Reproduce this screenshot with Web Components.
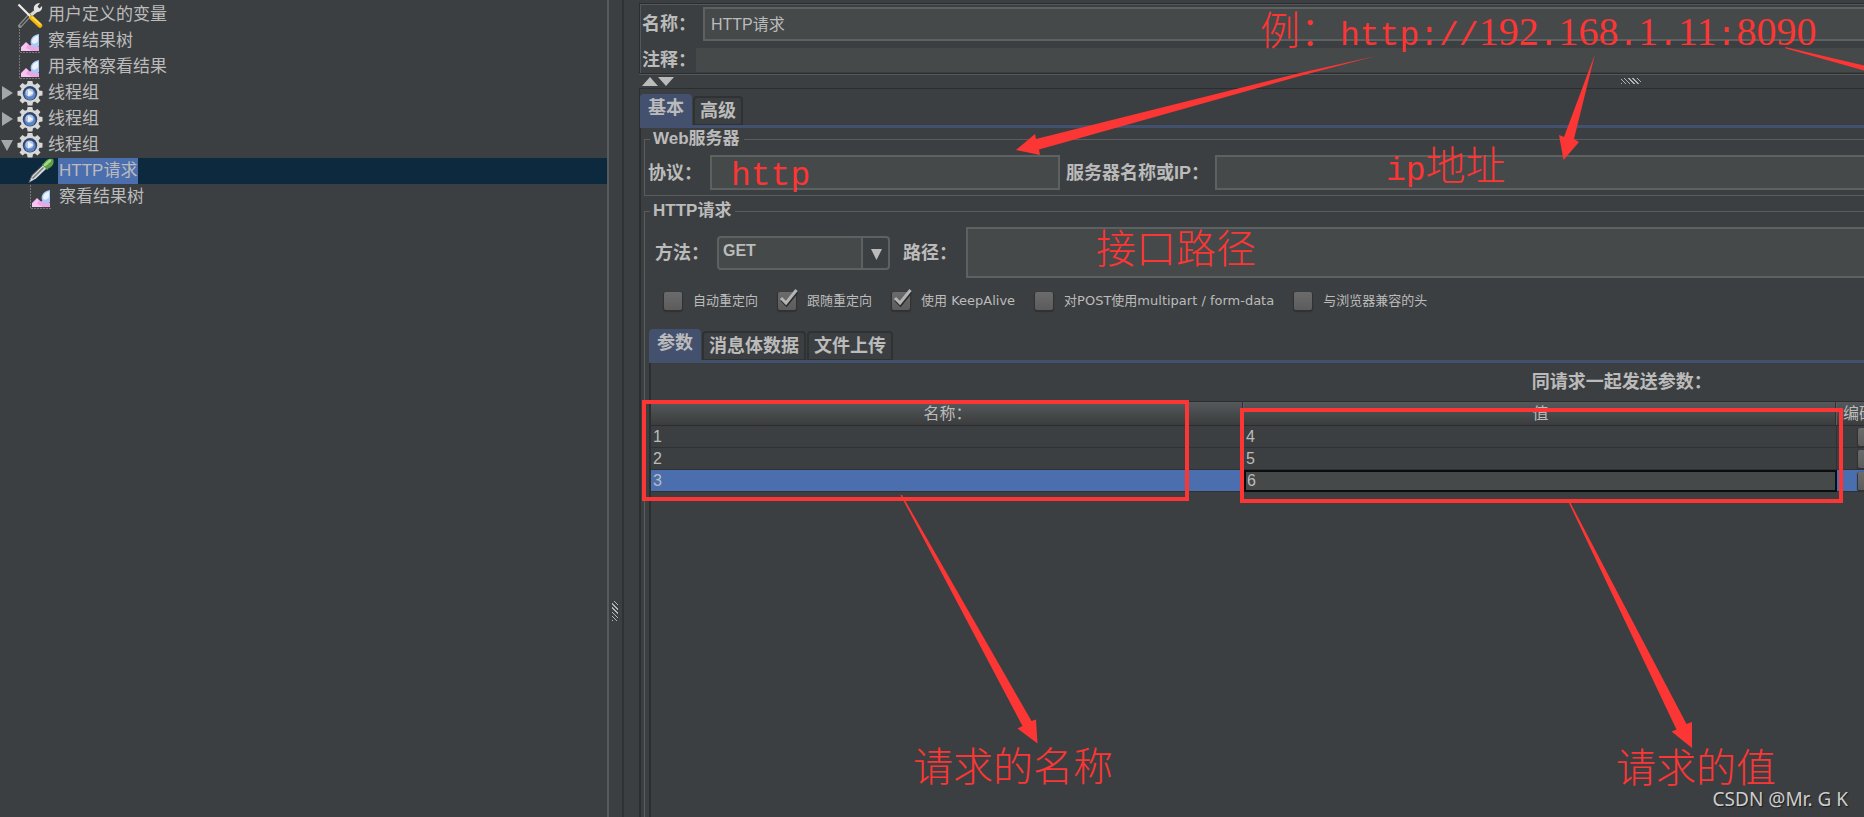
<!DOCTYPE html>
<html lang="zh-CN">
<head>
<meta charset="utf-8">
<title>HTTP请求</title>
<style>
  html, body { height: 100%; margin: 0; }
  body {
    --bg: #3c3f41;
    --field: #45494a;
    --edge: #5e6162;
    --dark: #2b2d2e;
    --light: #55585a;
    --accent: #43516f;
    --select: #4b6eaf;
    --red: #fc3635;
    background: var(--bg);
    color: #bbbbbb;
    font-family: "Liberation Sans", "Noto Sans CJK SC", sans-serif;
    overflow: hidden;
  }
</style>
</head>
<body>
<jm-app></jm-app>

<script>
const define = (name, html) => customElements.define(name, class extends HTMLElement {
  connectedCallback() {
    if (this.shadowRoot) return;
    const root = this.attachShadow({ mode: 'open' });
    root.innerHTML = typeof html === 'function' ? html(this) : html;
  }
});

/* ---------- icons ---------- */
const ICONS = {
  tools: `<path d="M3 24 L13 13" stroke="#8d8d8d" stroke-width="4" stroke-linecap="round"/>
    <path d="M3.500 23.500 L14 12" stroke="#3f4244" stroke-width="1.500"/>
    <path d="M14 13 L20 8" stroke="#d9d9d9" stroke-width="3.500"/>
    <path d="M17 8 C16 4 19 1 23 1 L20.500 4.500 L22.500 6.500 L25 4 C26 8 22 11 18 10Z" fill="#e4e4e4"/>
    <path d="M1.500 2.500 L14 15" stroke="#ececec" stroke-width="2.200"/>
    <path d="M14.500 15.500 L23 23.500" stroke="#f3b60c" stroke-width="4.500" stroke-linecap="round"/>
    <path d="M15 15 L23.500 22.500" stroke="#ffe163" stroke-width="1.500"/>`,
  chart: `<path d="M2.500 1 V24.500 H23" fill="none" stroke="#777" stroke-width="1" stroke-dasharray="2 1"/>
    <path d="M4 23 V19 L9 14 L13 17.500 L17 15.500 L22 19 V23Z" fill="#eda6e4"/>
    <path d="M4 23 V19.500 L9 14.500 L11 16.500 L9 20 L15 23Z" fill="#fbd3f6" opacity=".7"/>
    <path d="M14 16 C12.500 11 16 7 22 6 V18 C20 20 15 20 14 16Z" fill="#a9c8f5"/>
    <path d="M15 14 C15 10 18 8 21 7.500 V13 C19 16 16 17 15 14Z" fill="#e9f3ff"/>`,
  gear: `<path fill="#d8d8d8" d="M10.600 1 H15.400 L16 4 L18 4.800 L20.500 3 L23.500 6 L21.500 8.500 L22.300 10.500 L25.500 11 V15.500 L22.300 16 L21.500 18 L23.500 20.500 L20.500 23.500 L18 21.500 L16 22.300 L15.400 25.500 H10.600 L10 22.300 L8 21.500 L5.500 23.500 L2.500 20.500 L4.500 18 L3.700 16 L.5 15.500 V11 L3.700 10.500 L4.500 8.500 L2.500 6 L5.500 3 L8 4.800 L10 4Z"/>
    <circle cx="13" cy="13.300" r="7.200" fill="#2c4672"/>
    <circle cx="13" cy="14.300" r="5.600" fill="#5b84c2"/>
    <circle cx="12.500" cy="12.500" r="4" fill="#b0c4e2"/>
    <path d="M11 9.500 L16.500 13 L11 16.500Z" fill="#eef3fb"/>`,
  pen: `<path d="M1 24.500 L4 17.500 L15 7 L18.500 10.500 L8 20.500Z" fill="#d8dadb"/>
    <path d="M1 24.500 L4 17.500 L15 7" fill="none" stroke="#6e7375" stroke-width="1"/>
    <path d="M4.500 20.500 L15.500 9.500" stroke="#75797b" stroke-width="1.500"/>
    <path d="M14 6.500 L16 5 C18 1 22 0 25 1 C27 5 24 9 21 10 L19 12Z" fill="#5fa045"/>
    <path d="M17 7 L22 2.500" stroke="#a5d98a" stroke-width="2.500" stroke-linecap="round"/>`
};
define('jm-icon', host => `
  <style>:host { display: block; width: 26px; height: 26px; } svg { display: block; }</style>
  <svg width="26" height="26" viewBox="0 0 26 26" fill="none" aria-hidden="true">${ICONS[host.getAttribute('name')]}</svg>`);

/* ---------- tree ---------- */
define('jm-tree-item', host => `
  <style>
    :host { display: flex; align-items: center; height: 26px; font-size: 17px; line-height: 26px; white-space: nowrap; }
    :host([level="2"]) { padding-left: 11px; }
    :host([selected]) { background: #0d293e; }
    .twisty { width: 17px; flex: none; }
    .twisty svg { display: block; }
    span { margin-left: 4px; padding: 0 1px; }
    :host([selected]) span { background: var(--select); }
  </style>
  <div class="twisty">${host.hasAttribute('state') ? `<svg width="17" height="26" viewBox="0 0 17 26" fill="#a4a6a7">
    <path d="${host.getAttribute('state') === 'open' ? 'M1 8 H13 L7 19Z' : 'M2 6 V20 L13 13Z'}"/></svg>` : ''}</div>
  <jm-icon name="${host.getAttribute('icon')}"></jm-icon>
  <span><slot></slot></span>`);

define('jm-tree', `
  <style>:host { display: block; padding-top: 2px; }</style>
  <jm-tree-item icon="tools">用户定义的变量</jm-tree-item>
  <jm-tree-item icon="chart">察看结果树</jm-tree-item>
  <jm-tree-item icon="chart">用表格察看结果</jm-tree-item>
  <jm-tree-item icon="gear" state="closed">线程组</jm-tree-item>
  <jm-tree-item icon="gear" state="closed">线程组</jm-tree-item>
  <jm-tree-item icon="gear" state="open">线程组</jm-tree-item>
  <jm-tree-item icon="pen" level="2" selected>HTTP请求</jm-tree-item>
  <jm-tree-item icon="chart" level="2">察看结果树</jm-tree-item>`);

/* ---------- split grips ---------- */
define('jm-grip', `
  <style>
    :host { display: block; width: 20px; height: 6px; }
    :host([vertical]) { width: 6px; height: 20px; }
    div { height: 100%; background: repeating-linear-gradient(45deg, #b4b4b4 0 1px, #3c3f41 1px 3px); }
  </style><div></div>`);

/* ---------- labelled text field ---------- */
define('jm-field', host => `
  <style>
    :host { display: flex; align-items: center; }
    label { flex: none; font-size: 18px; line-height: 24px; font-weight: bold; white-space: nowrap; margin-right: var(--gap, 8px); }
    input {
      flex: 1; min-width: 0; box-sizing: border-box; height: var(--h, 35px); margin: 0; padding: 0 6px 2px;
      border: 2px solid var(--edge); border-radius: 0; outline: 0; background: var(--field);
      color: inherit; font: 16px "Liberation Sans", "Noto Sans CJK SC", sans-serif;
    }
    :host([plain]) input { border: 0; }
  </style>
  <label for="f">${host.getAttribute('label')}</label>
  <input id="f" type="text" value="${host.getAttribute('value') || ''}">`);

/* ---------- combo box ---------- */
define('jm-combo', host => `
  <style>
    :host { display: flex; align-items: center; }
    label { font-size: 18px; line-height: 24px; font-weight: bold; white-space: nowrap; margin-right: 8px; }
    .box { position: relative; width: 173px; height: 34px; }
    select {
      appearance: none; width: 100%; height: 100%; margin: 0; padding: 0 4px 4px;
      border: 2px solid var(--edge); border-radius: 4px; outline: 0;
      background: linear-gradient(90deg, var(--field) 142px, var(--edge) 142px 144px, var(--bg) 144px);
      color: inherit; font: bold 16px "Liberation Sans", sans-serif;
    }
    svg { position: absolute; right: 8px; top: 12px; pointer-events: none; }
  </style>
  <label for="s">${host.getAttribute('label')}</label>
  <div class="box">
    <select id="s"><option>GET</option></select>
    <svg width="11" height="12" viewBox="0 0 11 12"><path d="M0 1 H11 L5.500 12Z" fill="#bbbbbb"/></svg>
  </div>`);

/* ---------- check box ---------- */
const CHECK_CSS = `
  input {
    appearance: none; flex: none; width: 18px; height: 18px; margin: 0; border-radius: 2px;
    background: linear-gradient(#6b6b6b, #5c5c5c); box-shadow: 0 1px 1px 1px #2f3132;
  }`;
define('jm-check', host => `
  <style>
    :host { display: block; }
    label { display: flex; align-items: center; gap: 11px; font: 13px/20px "DejaVu Sans", "Noto Sans CJK SC", sans-serif; white-space: nowrap; }
    .box { position: relative; display: flex; }
    svg { position: absolute; left: 0; top: -5px; pointer-events: none; }
    ${CHECK_CSS}
  </style>
  <label>
    <span class="box"><input type="checkbox" ${host.hasAttribute('checked') ? 'checked' : ''}>
    ${host.hasAttribute('checked') ? `<svg width="22" height="22" viewBox="0 0 22 22" fill="none" stroke-width="3">
      <path d="M3.500 13 L8.500 18 L19 5" stroke="#2a2c2d"/><path d="M3 11 L8 16 L18.500 3" stroke="#b4b4b4"/></svg>` : ''}</span>
    <slot></slot>
  </label>`);

/* ---------- tabs ---------- */
define('jm-tabs', host => {
  const tabs = host.getAttribute('tabs').split(',');
  return `
  <style>
    :host { display: block; }
    nav { display: flex; align-items: flex-end; gap: 1px; border-bottom: 3px solid var(--accent); }
    button {
      box-sizing: border-box; height: 29px; margin: 0; padding: 0 5px; border: 2px solid #2f3233; border-bottom-width: 1px;
      border-radius: 4px 4px 0 0; background: var(--bg); color: inherit; white-space: nowrap;
      font: bold 18px/24px "Liberation Sans", "Noto Sans CJK SC", sans-serif;
    }
    button[aria-selected="true"] { height: 31px; padding: 0 8px 3px; border: 0; background: var(--accent); }
  </style>
  <nav role="tablist">${tabs.map((t, i) => `<button role="tab" aria-selected="${i === 0}">${t}</button>`).join('')}</nav>
  <slot></slot>`;
});

/* ---------- titled group ---------- */
define('jm-group', host => `
  <style>
    :host { display: block; }
    fieldset { margin: 0; padding: 0; border: 1px solid #5a5d5f; min-width: 0; }
    legend { margin-left: 5px; padding: 0 4px 0 3px; font-size: 17px; line-height: 20px; font-weight: bold; }
    :host([fill]) fieldset { border-bottom: 0; }
  </style>
  <fieldset><legend>${host.getAttribute('title-text')}</legend><slot></slot></fieldset>`);

/* ---------- parameter table ---------- */
define('jm-params', `
  <style>
    :host { display: block; border-left: 2px solid var(--dark); padding-right: 12px; min-height: 460px; }
    h2 { margin: 0; padding-right: 18px; font-size: 18px; line-height: 38px; font-weight: bold; text-align: center; }
    table { width: 100%; table-layout: fixed; border-collapse: separate; border-spacing: 0; font-size: 16px; }
    th, td { box-sizing: border-box; padding: 0; overflow: hidden; white-space: nowrap; }
    th {
      height: 25px; line-height: 23px; font-weight: normal; border-top: 1px solid var(--dark); border-bottom: 1px solid var(--dark);
      background: linear-gradient(90deg, transparent calc(100% - 2px), #2f3132 0 calc(100% - 1px), #5c5f61 0),
                  linear-gradient(#55595b, #3a3c3d);
    }
    td { height: 22px; line-height: 21px; padding-left: 2px; border-bottom: 1px solid #2f3132; }
    td:nth-child(2) { border-right: 1px solid #2f3132; }
    .name, .value { width: 593px; }
    .encode { width: 60px; }
    .on td { background: var(--select); }
    .on .edit { padding: 0; background: var(--field); border: 0; }
    td input[type=text] {
      display: block; box-sizing: border-box; width: 100%; height: 22px; margin: 0; padding: 0 1px; border: 2px solid #0b0c0c;
      border-radius: 0; outline: 0; background: var(--field); color: inherit; font: 16px "Liberation Sans", sans-serif;
    }
    td.c { text-align: center; padding: 0; }
    ${CHECK_CSS}
    input[type=checkbox] { display: block; margin: 0 auto; }
  </style>
  <h2>同请求一起发送参数：</h2>
  <table>
    <thead><tr><th class="name">名称：</th><th class="value">值</th><th class="encode">编码？</th><th></th></tr></thead>
    <tbody>
      <tr><td>1</td><td>4</td><td class="c"><input type="checkbox" aria-label="编码 1"></td><td></td></tr>
      <tr><td>2</td><td>5</td><td class="c"><input type="checkbox" aria-label="编码 2"></td><td></td></tr>
      <tr class="on"><td>3</td><td class="edit"><input type="text" value="6" aria-label="值"></td><td class="c"><input type="checkbox" aria-label="编码 3"></td><td></td></tr>
    </tbody>
  </table>`);

/* ---------- request editor ---------- */
define('jm-editor', `
  <style>
    :host { display: block; width: 162%; padding-top: 3px; }
    .head { border: 1px solid var(--dark); border-width: 1px 0 1px 1px; box-shadow: inset 1px 1px var(--light), 0 1px var(--light); padding: 3px 0 1px 2px; display: grid; gap: 7px; }
    .name { --h: 34px; --gap: 7px; }
    .note { --h: 24px; --gap: 0px; }
    .split { display: flex; align-items: center; height: 14px; padding-right: 36px; }
    .split svg { margin-left: 3px; }
    .split jm-grip { margin: 0 auto; }
    .body { border: 1px solid var(--dark); border-width: 1px 0 0 1px; padding: 5px 0 0; }
    .inner { padding: 1px 0 0 3px; border-left: 1px solid var(--dark); }
    jm-group + jm-group { margin-top: 5px; }
    .server { display: flex; gap: 6px; padding: 6px 0 5px 3px; }
    .proto { flex: 0 0 412px; }
    .host { flex: 1; --gap: 6px; }
    .request { display: flex; align-items: center; gap: 13px; padding: 6px 0 0 10px; }
    .path { flex: 1; --h: 51px; --gap: 9px; }
    .checks { display: flex; gap: 20px; padding: 13px 0 18px 19px; }
    .params { padding-left: 4px; }
  </style>
  <div class="head">
    <jm-field class="name" label="名称：" value="HTTP请求"></jm-field>
    <jm-field class="note" plain label="注释："></jm-field>
  </div>
  <div class="split">
    <svg width="33" height="9" viewBox="0 0 33 9" fill="#bbbbbb"><path d="M0 9 H16 L8 0Z M16 0 H32 L24 9Z"/></svg>
    <jm-grip></jm-grip>
  </div>
  <div class="body">
    <jm-tabs tabs="基本,高级">
      <div class="inner">
        <jm-group title-text="Web服务器">
          <div class="server">
            <jm-field class="proto" label="协议："></jm-field>
            <jm-field class="host" label="服务器名称或IP："></jm-field>
          </div>
        </jm-group>
        <jm-group fill title-text="HTTP请求">
          <div class="request">
            <jm-combo label="方法："></jm-combo>
            <jm-field class="path" label="路径："></jm-field>
          </div>
          <div class="checks">
            <jm-check>自动重定向</jm-check>
            <jm-check checked>跟随重定向</jm-check>
            <jm-check checked>使用 KeepAlive</jm-check>
            <jm-check>对POST使用multipart / form-data</jm-check>
            <jm-check>与浏览器兼容的头</jm-check>
          </div>
          <jm-tabs class="params" tabs="参数,消息体数据,文件上传">
            <jm-params></jm-params>
          </jm-tabs>
        </jm-group>
      </div>
    </jm-tabs>
  </div>`);

/* ---------- hand-drawn notes on top of the window ---------- */
define('jm-note', host => `
  <style>
    :host { position: absolute; left: ${host.getAttribute('x')}px; top: ${host.getAttribute('y')}px;
      color: var(--red); font: 300 40px/40px "Noto Sans CJK SC", sans-serif; white-space: nowrap; }
    ::slotted(.mono) { font: 33px/40px "Liberation Mono", monospace; }
    ::slotted(.digits) { font: 40px/40px "Liberation Serif", serif; }
  </style><slot></slot>`);
define('jm-notes', `
  <style>
    :host { position: absolute; inset: 0; overflow: hidden; pointer-events: none; }
    svg { display: block; }
  </style>
  <svg width="100%" height="100%" aria-hidden="true">
    <g fill="#fc3635">
      <path d="M1376 56 L1300 73 L1036 139 L1035 134 L1016 150 L1040 155 L1039 149.500 L1300 76Z"/>
      <path d="M1595 54 L1564 137 L1559 135 L1563.500 160 L1579 142 L1574 139Z"/>
      <path d="M1785 47 L1864 65.500 V70.500 L1786 48.500Z"/>
      <path d="M900.500 495 L1022.500 726 L1017.500 728.500 L1037.500 743.500 L1036 719.500 L1031.500 721 L902 495Z"/>
      <path d="M1568 501 L1676.500 729.500 L1671.500 731.500 L1692 748 V722 L1686.500 724 L1569.500 501Z"/>
    </g>
    <g fill="none" stroke="#fc3635" stroke-width="4">
      <rect x="644" y="402" width="543" height="97"/>
      <rect x="1242" y="410" width="599" height="91"/>
    </g>
  </svg>
  <jm-note x="1260" y="8">例：<span class="mono">http://</span><span class="digits">192</span><span class="mono">.</span><span class="digits">168</span><span class="mono">.</span><span class="digits">1</span><span class="mono">.</span><span class="digits">11</span><span class="mono">:</span><span class="digits">8090</span></jm-note>
  <jm-note x="731" y="148"><span class="mono">http</span></jm-note>
  <jm-note x="1386" y="143"><span class="mono">ip</span>地址</jm-note>
  <jm-note x="1096" y="226">接口路径</jm-note>
  <jm-note x="913" y="744">请求的名称</jm-note>
  <jm-note x="1616" y="745">请求的值</jm-note>`);

define('jm-watermark', `
  <style>
    :host { position: absolute; right: 16px; bottom: 6px; color: #cdcdcd; font: 19px/24px "Noto Sans", sans-serif; text-shadow: 1px 1px 1px #1c1d1e; white-space: nowrap; }
  </style><slot></slot>`);

/* ---------- window ---------- */
define('jm-app', `
  <style>
    :host { display: flex; position: relative; height: 100%; overflow: hidden; }
    aside { flex: 0 0 607px; overflow: hidden; }
    .bar { flex: none; box-sizing: border-box; width: 17px; display: flex; align-items: center; padding: 405px 0 0 3px;
      border-left: 2px solid #585b5d; border-right: 2px solid #2f3132; }
    main { flex: 1; min-width: 0; margin-left: 15px; overflow: hidden; }
  </style>
  <aside><jm-tree></jm-tree></aside>
  <div class="bar"><jm-grip vertical></jm-grip></div>
  <main><jm-editor></jm-editor></main>
  <jm-notes></jm-notes>
  <jm-watermark>CSDN @Mr. G K</jm-watermark>`);
</script>
</body>
</html>
